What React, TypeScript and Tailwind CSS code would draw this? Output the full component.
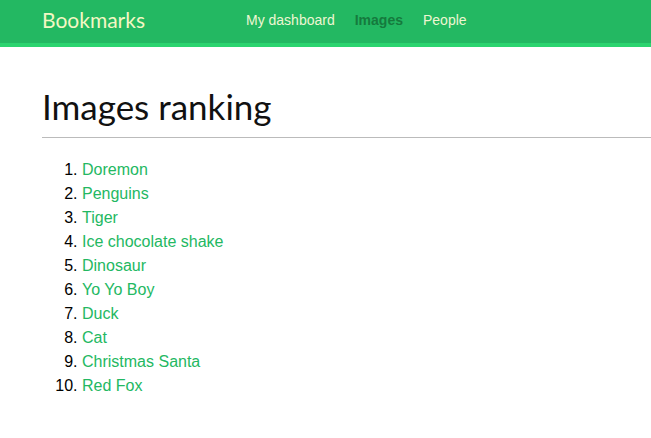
export default function App() {
  const items = [
    "Doremon",
    "Penguins",
    "Tiger",
    "Ice chocolate shake",
    "Dinosaur",
    "Yo Yo Boy",
    "Duck",
    "Cat",
    "Christmas Santa",
    "Red Fox",
  ];
  return (
    <div className="min-h-[438px] bg-white" style={{ fontFamily: "'Liberation Sans', Arial, sans-serif" }}>
      <div className="h-[47px] bg-[#23b862] border-b-4 border-[#2bd46f] flex items-center">
        <div className="w-[246px] pl-[42px] text-[21px] text-[#f3f7c4] leading-none font-['Lato',sans-serif] -mt-[4px]">
          Bookmarks
        </div>
        <nav className="flex gap-[20px] text-[14px] text-[#eef6d2] -mt-[3px]">
          <span>My dashboard</span>
          <span className="text-[#157a3d] font-bold">Images</span>
          <span>People</span>
        </nav>
      </div>
      <div className="pl-[42px]">
        <h1 className="pt-[39px] pb-[10px] text-[35px] leading-[41px] text-[#111] font-['Lato',sans-serif] border-b border-[#bbbbbb]">
          Images ranking
        </h1>
        <ol className="list-decimal pl-[40px] pt-[20px] text-[16px] leading-[24px] text-black">
          {items.map((it) => (
            <li key={it}>
              <span className="text-[#23b862]">{it}</span>
            </li>
          ))}
        </ol>
      </div>
    </div>
  );
}
